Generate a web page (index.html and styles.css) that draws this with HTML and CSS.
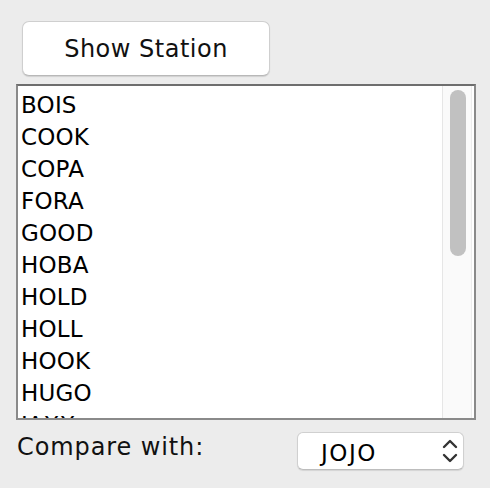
FILE: index.html
```html
<!DOCTYPE html>
<html>
<head>
<meta charset="utf-8">
<link rel="stylesheet" href="styles.css">
</head>
<body>
<div class="app">
  <div class="top">
    <button class="btn">Show Station</button>
  </div>
  <div class="listbox">
    <ul class="items">
      <li>BOIS</li>
      <li>COOK</li>
      <li>COPA</li>
      <li>FORA</li>
      <li>GOOD</li>
      <li>HOBA</li>
      <li>HOLD</li>
      <li>HOLL</li>
      <li>HOOK</li>
      <li>HUGO</li>
      <li>JAXX</li>
    </ul>
    <div class="track"><div class="thumb"></div></div>
  </div>
  <div class="bottom">
    <span class="label">Compare with:</span>
    <div class="popup">
      <span class="value">JOJO</span>
      <svg class="chev" width="20" height="28" viewBox="0 0 20 28">
        <path d="M4 10 L10 4 L16 10" fill="none" stroke="#333" stroke-width="2.4" stroke-linecap="round" stroke-linejoin="round"/>
        <path d="M4 18 L10 24 L16 18" fill="none" stroke="#333" stroke-width="2.4" stroke-linecap="round" stroke-linejoin="round"/>
      </svg>
    </div>
  </div>
</div>
</body>
</html>
```

FILE: styles.css
```css
html, body {
  margin: 0;
  padding: 0;
  background: #ececec;
  width: 490px;
  height: 488px;
  overflow: hidden;
}
.app {
  font-family: "DejaVu Sans", "Liberation Sans", sans-serif;
  font-size: 23px;
  color: #000;
  padding: 21px 14px 0 16px;
}
.top {
  padding-left: 6px;
}
.btn {
  width: 248px;
  height: 55px;
  background: #fff;
  border: 1px solid #cfcfcf;
  border-bottom-color: #b8b8b8;
  border-radius: 7px;
  box-shadow: 0 1px 1px rgba(0,0,0,0.12);
  font-family: inherit;
  font-size: 24px;
  letter-spacing: 0.5px;
  color: #111;
  padding: 0;
  display: block;
}
.listbox {
  margin-top: 8px;
  width: 460px;
  height: 336px;
  box-sizing: border-box;
  border: 2px solid #8a8a8a;
  border-top-color: #6e6e6e;
  background: #fff;
  display: flex;
  overflow: hidden;
}
.items {
  list-style: none;
  margin: 0;
  padding: 0 0 0 3px;
  flex: 1;
  letter-spacing: 0.2px;
}
.items li {
  height: 32px;
  line-height: 32px;
  padding-top: 3px;
  box-sizing: border-box;
}
.track {
  width: 30px;
  box-sizing: border-box;
  margin-right: 2px;
  background: #fafafa;
  border-left: 1px solid #e6e6e6;
  border-right: 1px solid #ededed;
  padding: 4px 0 0 7px;
}
.thumb {
  width: 16px;
  height: 166px;
  border-radius: 8px;
  background: #c1c1c1;
}
.bottom {
  display: flex;
  justify-content: space-between;
  align-items: flex-start;
  margin-top: 12px;
  padding-right: 12px;
}
.label {
  padding-left: 1px;
  padding-top: 2px;
  line-height: 26px;
  font-size: 24px;
  letter-spacing: 0.9px;
  color: #111;
}
.popup {
  width: 167px;
  height: 38px;
  box-sizing: border-box;
  background: #fff;
  border: 1px solid #d0d0d0;
  border-bottom-color: #bdbdbd;
  border-radius: 6px;
  box-shadow: 0 1px 1px rgba(0,0,0,0.1);
  display: flex;
  align-items: center;
  justify-content: space-between;
  padding: 0 3px 0 23px;
}
.value {
  padding-top: 4px;
  letter-spacing: 1.5px;
}
.chev {
  display: block;
}
```
